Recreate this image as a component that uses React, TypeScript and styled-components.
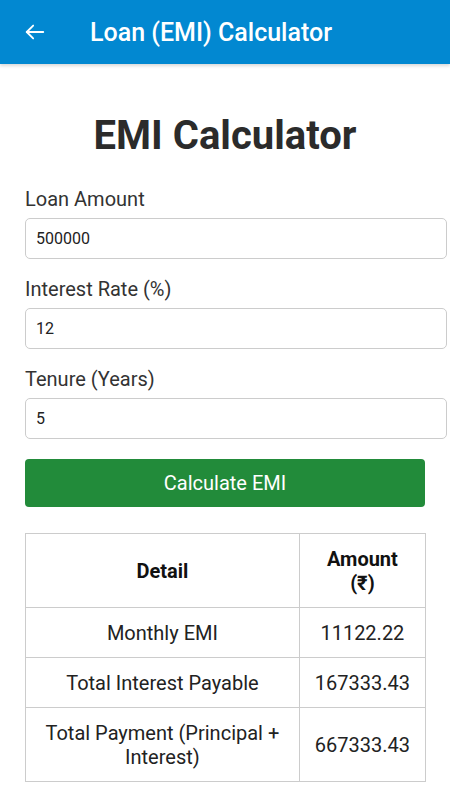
import React from "react";
import styled, { createGlobalStyle } from "styled-components";

const Global = createGlobalStyle`
  html, body { margin: 0; padding: 0; background: #fff; }
  body { font-family: Roboto, "Noto Sans", "Liberation Sans", sans-serif; color: #333; }
  * { box-sizing: content-box; }
`;

const AppBar = styled.header`
  height: 64px;
  background: #0288d1;
  display: flex;
  align-items: center;
  box-shadow: 0 2px 3px rgba(0, 0, 0, 0.15);
  position: relative;
  z-index: 1;
`;

const BackButton = styled.button`
  width: 70px;
  height: 64px;
  padding: 0 0 0 24px;
  margin: 0;
  border: none;
  background: transparent;
  display: flex;
  align-items: center;
  box-sizing: border-box;
`;

const AppTitle = styled.h1`
  margin: 0 0 0 20px;
  font-size: 25px;
  font-weight: 500;
  color: #fff;
`;

const Content = styled.main`
  padding: 20px 25px 20px;
`;

const Heading = styled.h2`
  margin: 28px 0 29px;
  text-align: center;
  font-size: 40px;
  font-weight: 700;
  color: #2b2b2b;
`;

const Field = styled.div`
  display: flex;
  flex-direction: column;
  margin-bottom: 19px;
`;

const Label = styled.label`
  font-size: 20px;
  color: #333;
  margin-bottom: 8px;
  line-height: 22px;
`;

const Input = styled.input`
  width: 100%;
  height: 21px;
  padding: 9px 10px;
  font-size: 16px;
  font-family: Roboto, "Noto Sans", sans-serif;
  color: #222;
  border: 1px solid #ccc;
  border-radius: 5px;
  outline: none;
`;

const CalcButton = styled.button`
  width: 100%;
  height: 48px;
  margin-top: 1px;
  border: none;
  border-radius: 4px;
  background: #228b3a;
  color: #fff;
  font-size: 20px;
  font-family: Roboto, "Noto Sans", sans-serif;
  box-sizing: border-box;
`;

const Table = styled.table`
  width: 100%;
  margin-top: 26px;
  border-collapse: collapse;
  font-size: 20px;
  color: #222;
`;

const Th = styled.th<{ $w?: number }>`
  border: 1px solid #ccc;
  padding: 12.5px 15px;
  font-weight: 700;
  line-height: 24px;
  text-align: center;
  width: ${(p) => (p.$w ? `${p.$w}px` : "auto")};
  color: #111;
`;

const Td = styled.td`
  border: 1px solid #ccc;
  padding: 12.5px 15px;
  line-height: 24px;
  text-align: center;
  font-weight: 400;
`;

const rows = [
  ["Monthly EMI", "11122.22"],
  ["Total Interest Payable", "167333.43"],
  ["Total Payment (Principal + Interest)", "667333.43"],
];

export default function App() {
  return (
    <>
      <Global />
      <AppBar>
        <BackButton aria-label="Back">
          <svg width="22" height="22" viewBox="0 0 24 24" fill="none" stroke="#fff" strokeWidth="2" strokeLinecap="round" strokeLinejoin="round">
            <path d="M21 12H3" />
            <path d="M10 5l-7 7 7 7" />
          </svg>
        </BackButton>
        <AppTitle>Loan (EMI) Calculator</AppTitle>
      </AppBar>
      <Content>
        <Heading>EMI Calculator</Heading>
        <Field>
          <Label>Loan Amount</Label>
          <Input defaultValue="500000" />
        </Field>
        <Field>
          <Label>Interest Rate (%)</Label>
          <Input defaultValue="12" />
        </Field>
        <Field>
          <Label>Tenure (Years)</Label>
          <Input defaultValue="5" />
        </Field>
        <CalcButton>Calculate EMI</CalcButton>
        <Table>
          <thead>
            <tr>
              <Th>Detail</Th>
              <Th $w={95}>Amount (₹)</Th>
            </tr>
          </thead>
          <tbody>
            {rows.map(([d, a]) => (
              <tr key={d}>
                <Td>{d}</Td>
                <Td>{a}</Td>
              </tr>
            ))}
          </tbody>
        </Table>
      </Content>
    </>
  );
}
